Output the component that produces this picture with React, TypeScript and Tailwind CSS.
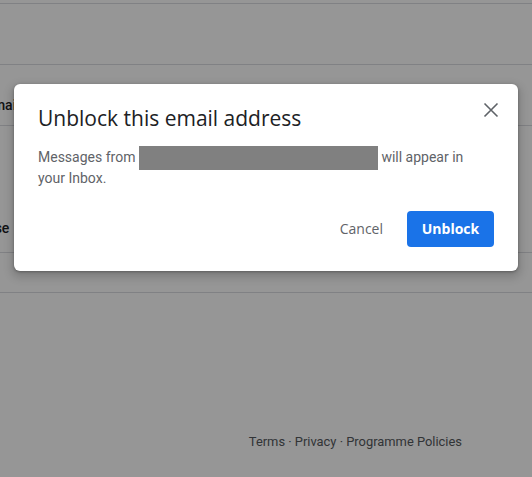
import React from 'react';

const CloseIcon = () => (
  <svg width="24" height="24" viewBox="0 0 24 24" fill="none" stroke="#5f6368" strokeWidth="1.6">
    <path d="M5.5 5.5l13 13M18.5 5.5l-13 13" />
  </svg>
);

export default function App() {
  return (
    <div className="relative h-[477px] w-[532px] overflow-hidden bg-white font-['Roboto',sans-serif]">
      {/* page behind the dialog */}
      <div className="flex h-full flex-col">
        <div className="h-[4px] border-b border-[#dadce0]" />
        <div className="h-[61px] border-b border-[#dadce0]" />
        <div className="h-[61px] border-b border-[#dadce0] pt-[28px]">
          <span className="ml-[-15px] text-sm leading-5 font-medium text-[#202124]">Email</span>
        </div>
        <div className="h-[127px] border-b border-[#dadce0] pt-[90px]">
          <span className="ml-[-26px] text-sm leading-5 font-medium text-[#202124]">Close</span>
        </div>
        <div className="h-[40px] border-b border-[#dadce0]" />
        <div className="flex justify-end pt-[141px] pr-[70px]">
          <p className="text-[12.9px] leading-4 text-[#55595d]">Terms · Privacy · Programme Policies</p>
        </div>
      </div>

      {/* dialog overlay */}
      <div className="absolute inset-0 bg-[rgba(0,0,0,0.41)] pt-[84px] pl-[14px]">
        <div className="relative w-[504px] rounded-[6px] bg-white px-6 pt-5 pb-6 shadow-[0_4px_8px_3px_rgba(0,0,0,0.15),0_1px_3px_rgba(0,0,0,0.3)]">
          <button className="absolute top-[14px] right-[15px]">
            <CloseIcon />
          </button>
          <h2 className="font-['Open_Sans',sans-serif] text-[21px] leading-7 text-[#202124]">
            Unblock this email address
          </h2>
          <p className="mt-[15px] pr-[10px] text-sm leading-5 text-[#5f6368]">
            Messages from{' '}
            <span className="-my-[2px] inline-block h-[24px] w-[239px] bg-[#808080] align-middle" />{' '}
            will appear in your Inbox.
          </p>
          <div className="mt-[23px] flex items-center justify-end gap-2">
            <button className="h-9 pr-4 pl-5 font-['Open_Sans',sans-serif] text-sm font-medium text-[#5f6368]">
              Cancel
            </button>
            <button className="h-9 w-[87px] rounded-[4px] bg-[#1a73e8] font-['Open_Sans',sans-serif] text-sm font-bold text-white">
              Unblock
            </button>
          </div>
        </div>
      </div>
    </div>
  );
}
